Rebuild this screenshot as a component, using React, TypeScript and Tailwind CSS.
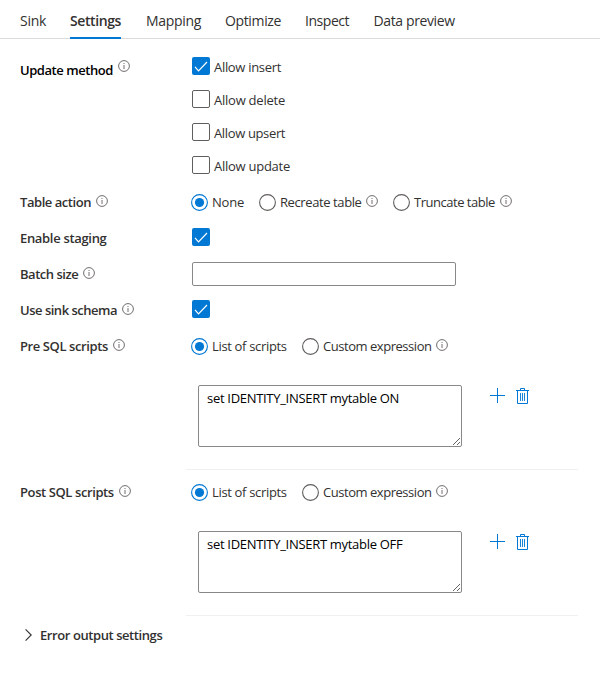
import type { ReactNode } from "react";

function InfoIcon({ className = "" }: { className?: string }) {
  return (
    <svg className={`h-3 w-3 shrink-0 ${className}`} viewBox="0 0 12 12" fill="none" stroke="#605e5c">
      <circle cx="6" cy="6" r="5.4" strokeWidth="0.9" />
      <path d="M6 5v4M6 3v1" strokeWidth="0.9" />
    </svg>
  );
}

function Checkbox({ checked = false }: { checked?: boolean }) {
  return checked ? (
    <span className="flex h-[18px] w-[18px] shrink-0 items-center justify-center rounded-[2px] bg-[#0078d4]">
      <svg className="h-[18px] w-[18px]" viewBox="0 0 18 18" fill="none" stroke="#fff" strokeWidth="1.2">
        <path d="M3 9.8l3.5 4L15 5" />
      </svg>
    </span>
  ) : (
    <span className="h-[18px] w-[18px] shrink-0 rounded-[2px] border border-[#605e5c] bg-white" />
  );
}

function Radio({ checked = false }: { checked?: boolean }) {
  return (
    <svg className="mt-0.5 h-[17px] w-[17px] shrink-0" viewBox="0 0 17 17" fill="none">
      <circle cx="8.5" cy="8.5" r="7.9" stroke={checked ? "#0078d4" : "#605e5c"} strokeWidth="1.1" />
      {checked && <circle cx="8.5" cy="8.5" r="4.6" fill="#0078d4" />}
    </svg>
  );
}

function Field({
  label,
  tracking,
  width,
  info = false,
  children,
}: {
  label: string;
  tracking: string;
  width: string;
  info?: boolean;
  children: ReactNode;
}) {
  return (
    <div className="flex h-9 items-start pl-5 pt-2">
      <div className="flex w-[171px] shrink-0 items-start font-semibold">
        <span className={`${width} ${tracking}`}>{label}</span>
        {info && <InfoIcon className="mt-[3px]" />}
      </div>
      {children}
    </div>
  );
}

function Option({
  label,
  width,
  tracking,
  checked = false,
  info = false,
}: {
  label: string;
  width: string;
  tracking: string;
  checked?: boolean;
  info?: boolean;
}) {
  return (
    <div className="flex items-start">
      <Radio checked={checked} />
      <span className={`ml-1 ${width} ${tracking}`}>{label}</span>
      {info && <InfoIcon className="mt-[3px]" />}
    </div>
  );
}

function ScriptEditor({ value }: { value: string }) {
  return (
    <div className="ml-[186px] mr-[22px] flex h-[106px] items-start border-b border-[#f0f0f0] pl-3 pt-[21px]">
      <textarea
        readOnly
        defaultValue={value}
        className="block h-[62px] w-[264px] resize rounded-[2px] border border-[#8a8886] bg-white px-2 py-0.5 tracking-[-0.3px] text-black outline-none"
      />
      <svg className="ml-7 mt-[3px] h-[15px] w-[15px]" viewBox="0 0 15 15" fill="#0078d4">
        <rect x="7" y="0" width="1" height="15" />
        <rect x="0" y="7" width="15" height="1" />
      </svg>
      <svg className="ml-[11px] mt-[3px] h-4 w-[13px]" viewBox="0 0 13 16" fill="none" stroke="#0078d4">
        <path d="M0 2.5h13M4.5 2.5v-2h4v2M1.5 2.5v13h10v-13" />
        <path d="M4.5 5v8M6.5 5v8M8.5 5v8" strokeWidth="0.9" />
      </svg>
    </div>
  );
}

const tabs = [
  { name: "Sink", style: "w-[26px] tracking-[-0.29px]" },
  { name: "Settings", style: "-mb-px mr-px w-[51px] border-b-2 border-[#0078d4] font-semibold tracking-[-0.4px]" },
  { name: "Mapping", style: "w-[55px] tracking-[-0.32px]" },
  { name: "Optimize", style: "w-[56px] tracking-[-0.36px]" },
  { name: "Inspect", style: "w-[44.5px] tracking-[-0.45px]" },
  { name: "Data preview", style: "w-[81px] tracking-[-0.38px]" },
];

const updateMethods = [
  { name: "Allow insert", tracking: "tracking-[-0.31px]", checked: true },
  { name: "Allow delete", tracking: "tracking-[-0.24px]" },
  { name: "Allow upsert", tracking: "tracking-[-0.36px]" },
  { name: "Allow update", tracking: "tracking-[-0.26px]" },
];

function ScriptOptions() {
  return (
    <div className="flex gap-[15px]">
      <Option label="List of scripts" width="w-[75px]" tracking="tracking-[-0.33px]" checked />
      <Option label="Custom expression" width="w-[113px]" tracking="tracking-[-0.46px]" info />
    </div>
  );
}

export default function App() {
  return (
    <div className="h-[685px] w-[600px] overflow-hidden whitespace-nowrap bg-white font-['Open_Sans','Noto_Sans',sans-serif] text-[13px] leading-5 text-[#323130]">
      <nav className="flex h-[39px] gap-6 border-b border-[#dcdcdc] pl-5 text-sm leading-5">
        {tabs.map((t) => (
          <div key={t.name} className={`pt-[11px] ${t.style}`}>
            {t.name}
          </div>
        ))}
      </nav>

      <section className="flex h-[145px] items-start pl-5 pt-[18px]">
        <div className="flex w-[172px] items-start font-semibold text-black">
          <span className="mt-[3px] w-[98px] tracking-[-0.44px]">Update method</span>
          <InfoIcon className="mt-[3px]" />
        </div>
        <div className="flex flex-col gap-[15px]">
          {updateMethods.map((m) => (
            <div key={m.name} className="flex h-[18px] gap-1">
              <Checkbox checked={m.checked} />
              <span className={m.tracking}>{m.name}</span>
            </div>
          ))}
        </div>
      </section>

      <Field label="Table action" width="w-[76px]" tracking="tracking-[-0.45px]" info>
        <div className="flex gap-[15px]">
          <Option label="None" width="w-8" tracking="tracking-[-0.22px]" checked />
          <Option label="Recreate table" width="w-[86px]" tracking="tracking-[-0.4px]" info />
          <Option label="Truncate table" width="w-[86px]" tracking="tracking-[-0.48px]" info />
        </div>
      </Field>
      <Field label="Enable staging" width="w-[90px]" tracking="tracking-[-0.32px]">
        <div className="pl-px">
          <Checkbox checked />
        </div>
      </Field>
      <Field label="Batch size" width="w-[63px]" tracking="tracking-[-0.48px]" info>
        <input
          readOnly
          className="-mt-0.5 ml-px h-6 w-[264px] rounded-[2px] border border-[#8a8886] bg-white outline-none"
        />
      </Field>
      <Field label="Use sink schema" width="w-[102px]" tracking="tracking-[-0.49px]" info>
        <div className="pl-px">
          <Checkbox checked />
        </div>
      </Field>
      <Field label="Pre SQL scripts" width="w-[93px]" tracking="tracking-[-0.4px]" info>
        <ScriptOptions />
      </Field>
      <ScriptEditor value="set IDENTITY_INSERT mytable ON" />
      <div className="h-1" />
      <Field label="Post SQL scripts" width="w-[99px]" tracking="tracking-[-0.4px]" info>
        <ScriptOptions />
      </Field>
      <ScriptEditor value="set IDENTITY_INSERT mytable OFF" />

      <div className="flex items-start pl-[25px] pt-[9px] font-semibold">
        <svg className="mt-1 h-3 w-[7px]" viewBox="0 0 7 12" fill="none" stroke="#323130" strokeWidth="1.1">
          <path d="M0.6 0.4L6.2 6L0.6 11.6" />
        </svg>
        <span className="ml-2 tracking-[-0.42px]">Error output settings</span>
      </div>
    </div>
  );
}
